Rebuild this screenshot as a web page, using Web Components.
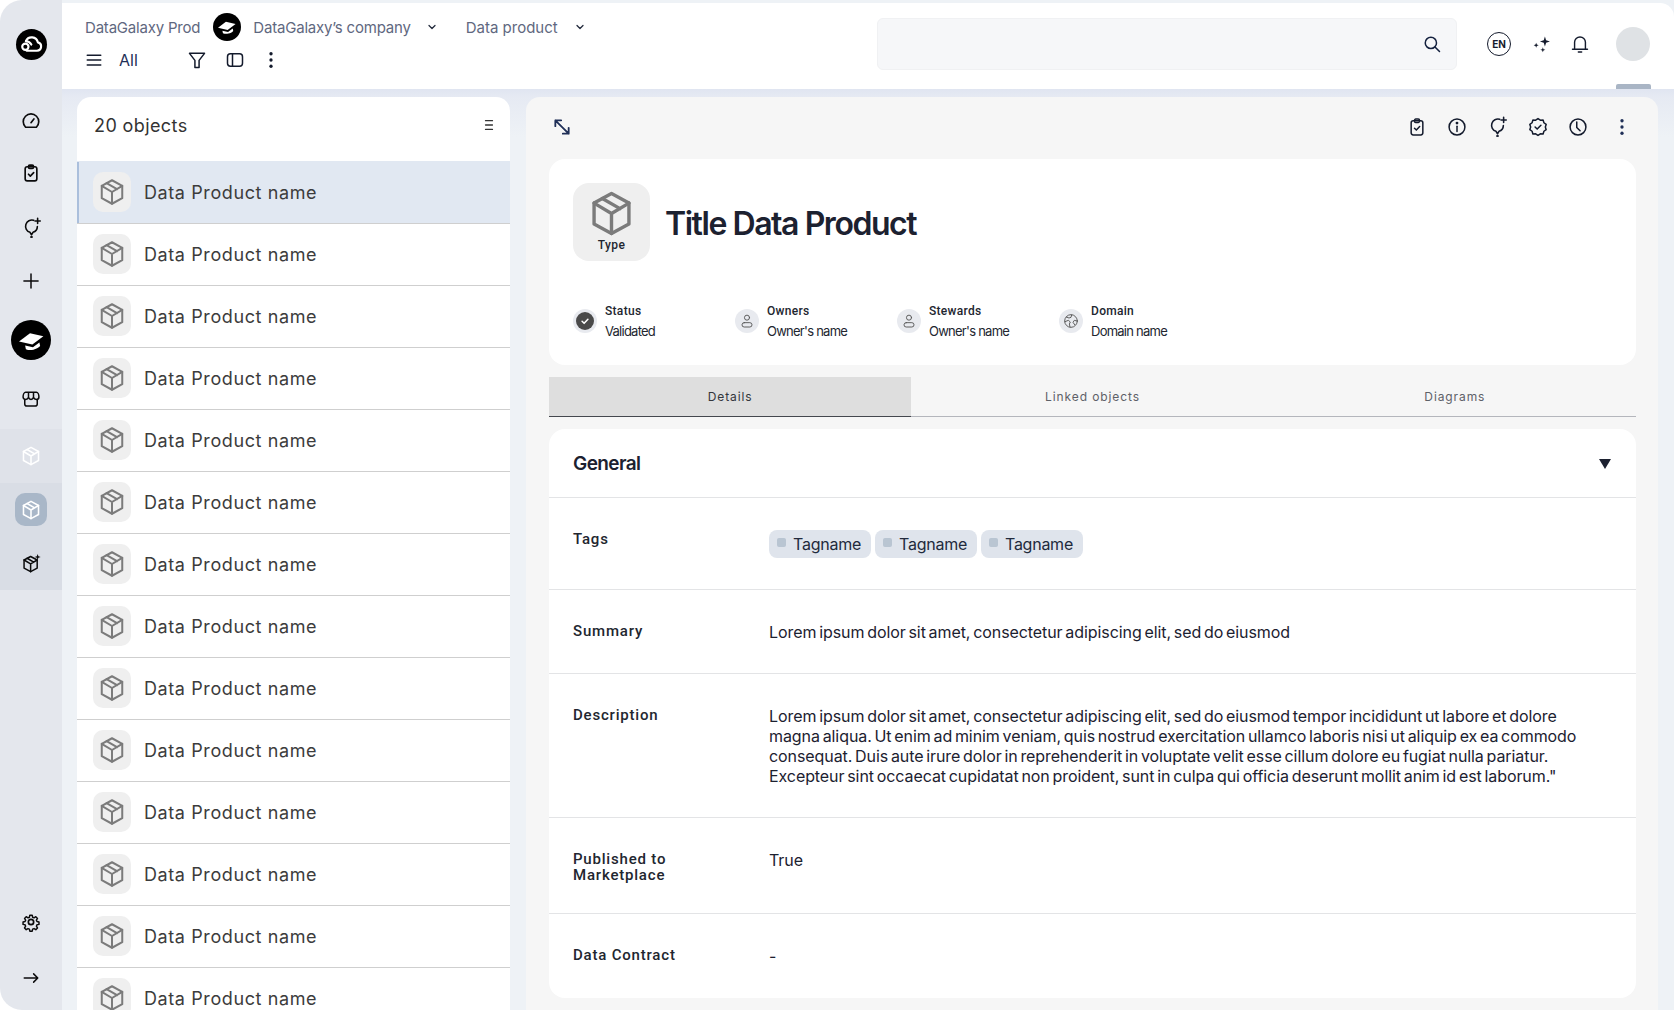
<!DOCTYPE html>
<html lang="en">
<head>
<meta charset="utf-8">
<title>Data product</title>
<style>
  html, body { margin: 0; background: #fff; }
</style>
</head>
<body>
<dg-app></dg-app>
<script>
// all the icons, on a 24 box, stroked with currentColor
const ICONS = {
  box: '<path d="M12 2.600l8.200 4.500v9.800L12 21.400l-8.200-4.500V7.100z"/><path d="M3.800 7.100L12 12l8.200-4.900M12 12v9.400M7.700 4.900l8.300 4.800"/>',
  boxspark: '<path d="M11 4l7.500 4v9.200L11 21.400l-7.500-4.200V8z"/><path d="M3.500 8L11 12.400 18.500 8M11 12.400v9M7 6l7.500 4.400"/><path fill="currentColor" stroke="none" d="M19 1l.9 2.600 2.600.9-2.600.9-.9 2.600-.9-2.600-2.600-.9 2.600-.9z"/>',
  gauge: '<path d="M5.500 19.500a9.300 9.300 0 1 1 13 0z"/><path d="M12 14l3.500-4.500"/>',
  clipboard: '<rect x="5" y="4.500" width="14" height="17" rx="2.500"/><rect x="9" y="2.500" width="6" height="4" rx="1.500"/><path d="M9 13.500l2.200 2.200 4-4.200"/>',
  bulb: '<path d="M14.500 3.800a7 7 0 1 0-4.200 13.700L12 20.300l1.700-2.800a7 7 0 0 0 5-6.500"/><path d="M19 1.500v6M16 4.500h6"/><circle cx="12" cy="22.800" r=".6" fill="currentColor"/>',
  plus: '<path d="M12 3.500v17M3.500 12h17"/>',
  store: '<path d="M5.500 4h13c1.500 0 3 2.500 3 5.500 0 1.500-1.200 3-3 3s-3-1-3.500-2.500c-.5 1.500-1.500 2.500-3 2.500s-2.500-1-3-2.500c-.5 1.500-1.700 2.500-3.500 2.500s-3-1.500-3-3C2.500 6.500 4 4 5.500 4z"/><path d="M4.500 12.500V18a2.500 2.500 0 0 0 2.500 2.500h10a2.500 2.500 0 0 0 2.500-2.500v-5.500M9 4.500V9M15 4.500V9"/>',
  gear: '<circle cx="12" cy="12" r="3.200"/><path d="M10.400 2.800h3.200l.6 2.700 1.900.8 2.400-1.500 2.300 2.300-1.500 2.400.8 1.900 2.700.6v3.200l-2.700.6-.8 1.900 1.500 2.400-2.300 2.300-2.400-1.500-1.900.8-.6 2.700h-3.200l-.6-2.700-1.900-.8-2.400 1.500-2.300-2.300 1.500-2.400-.8-1.900-2.700-.6v-3.200l2.700-.6.800-1.900-1.500-2.400 2.300-2.300 2.400 1.500 1.900-.8z" transform="translate(1.400 1.400) scale(.885)"/>',
  arrow: '<path d="M3 12h18M15.500 6.500L21 12l-5.500 5.500"/>',
  menu: '<path d="M3 5.500h18M3 12h18M3 18.500h18"/>',
  filter: '<path d="M3 4h18l-6.500 8.500V21h-5v-8.500z"/>',
  panel: '<rect x="3" y="4.500" width="18" height="15" rx="3.500"/><path d="M9 4.500v15"/>',
  dots: '<g fill="currentColor" stroke="none"><circle cx="12" cy="4.500" r="2"/><circle cx="12" cy="12" r="2"/><circle cx="12" cy="19.500" r="2"/></g>',
  chevron: '<path d="M6 9l6 6 6-6"/>',
  search: '<circle cx="10.500" cy="10.500" r="7.500"/><path d="M16 16l6 6"/>',
  sparks: '<g fill="currentColor" stroke="none"><path d="M15.500 3l1.400 4.600 4.600 1.400-4.600 1.400-1.400 4.600-1.400-4.600L9.500 9l4.600-1.400z"/><path d="M5 10.500l.8 2.200 2.200.8-2.200.8L5 16.500l-.8-2.200-2.200-.8 2.200-.8z"/><path d="M13 16l.8 2.200 2.200.8-2.200.8-.8 2.200-.8-2.200-2.200-.8 2.200-.8z"/></g>',
  bell: '<path d="M5.500 18V10a6.500 6.500 0 0 1 13 0v8"/><path d="M3 18.300h18"/><path d="M10 21.500h4"/>',
  expand: '<path d="M4 4l16 16M4 11V4h7M20 13v7h-7"/>',
  lines: '<path d="M6 4.500h12M6 12h12M6 19.500h12"/>',
  info: '<circle cx="12" cy="12" r="9.500"/><path d="M12 11v6.500"/><circle cx="12" cy="7.300" r=".8" fill="currentColor"/>',
  badge: '<path d="M12 2.500l2.800 1.900 3.300-.1 1 3.200 2.700 2-1 3.100 1 3.200-2.700 1.900-1 3.200-3.300-.1L12 22.700l-2.800-1.900-3.300.1-1-3.200-2.700-1.900 1-3.200-1-3.100 2.700-2 1-3.200 3.300.1z" transform="translate(0 -.6)"/><path d="M8.500 12l2.500 2.500 4.500-4.500"/>',
  clock: '<circle cx="12" cy="12" r="9.500"/><path d="M10.500 6v6.500l4 4"/>',
  user: '<circle cx="12" cy="7" r="3.800"/><rect x="4.500" y="14.500" width="15" height="6.500" rx="3.250"/>',
  globe: '<circle cx="12" cy="12" r="9.500"/><path d="M5 6l4 1.500 3-1 1-3.500M3 13l5-2 3 2.500-1.500 3 1 4.500M21 12l-4-1-2 3 2.500 3.500"/>',
  check: '<path d="M7 12.500l3.500 3.500 6.500-7"/>',
  cap: '<g transform="rotate(-12 12 12)"><path fill="currentColor" stroke="none" d="M12 5L24 10.500 12 16 0 10.500z"/><path fill="currentColor" stroke="none" d="M5 15.500l7 3.200 7-3.200V19c-2 1.500-4.500 2-7 2s-5-.5-7-2z"/></g>',
  logo: '<circle cx="6.800" cy="14.500" r="2.900"/><path d="M8 18.200h9.500a3.900 3.900 0 0 0 .8-7.700 5.800 5.800 0 0 0-11-1.200"/><path d="M7.300 9.300c2.300.2 4 1.300 5 3.200"/>'
};

class DgIcon extends HTMLElement {
  constructor () {
    super();
    this.attachShadow({ mode: 'open' });
  }
  connectedCallback () {
    const size = this.getAttribute('size') || 20;
    const stroke = this.getAttribute('stroke') || 2;
    this.shadowRoot.innerHTML = `
      <style>
        :host { display: inline-flex; flex: none; width: ${size}px; height: ${size}px; }
        svg { width: 100%; height: 100%; display: block; fill: none; stroke: currentColor; stroke-width: ${stroke}; stroke-linecap: round; stroke-linejoin: round; }
      </style>
      <svg viewBox="0 0 24 24">${ICONS[this.getAttribute('name')]}</svg>`;
  }
}

// one slot of the left rail, --h is set by the rail
class DgRailItem extends HTMLElement {
  constructor () {
    super();
    this.attachShadow({ mode: 'open' });
    this.shadowRoot.innerHTML = `
      <style>
        :host { display: flex; align-items: center; justify-content: center; height: var(--h, 54px); box-sizing: border-box; color: #0b0b0c; }
        :host([kind="round"]) .in { width: 40px; height: 40px; border-radius: 50%; background: #000; color: #fff; }
        :host([kind="logo"]) .in { width: 31px; height: 31px; border-radius: 50%; background: #000; color: #fff; }
        :host([kind="ghost"]) { color: #fff; }
        :host([kind="active"]) .in { width: 32px; height: 33px; border-radius: 10px; background: #a9b7c8; color: #fff; }
        .in { display: flex; align-items: center; justify-content: center; }
      </style>
      <div class="in"><slot></slot></div>`;
  }
}

class DgRail extends HTMLElement {
  constructor () {
    super();
    this.attachShadow({ mode: 'open' });
    this.shadowRoot.innerHTML = `
      <style>
        :host { display: flex; flex-direction: column; background: #e4e7ed; border-radius: 22px 0 0 22px; overflow: hidden; }
        .group { background: #dfe2e9; }
        .picked { background: #d9dde5; }
        .fill { flex: 1; }
      </style>
      <dg-rail-item kind="logo" style="--h:95px;padding-bottom:7px"><dg-icon name="logo" size="26" stroke="2"></dg-icon></dg-rail-item>
      <dg-rail-item style="--h:52px"><dg-icon name="gauge" size="20"></dg-icon></dg-rail-item>
      <dg-rail-item style="--h:52px"><dg-icon name="clipboard" size="20"></dg-icon></dg-rail-item>
      <dg-rail-item style="--h:56px"><dg-icon name="bulb" size="21" stroke="1.800"></dg-icon></dg-rail-item>
      <dg-rail-item style="--h:52px"><dg-icon name="plus" size="20" stroke="1.800"></dg-icon></dg-rail-item>
      <dg-rail-item kind="round" style="--h:66px"><dg-icon name="cap" size="25"></dg-icon></dg-rail-item>
      <dg-rail-item style="--h:56px;padding-bottom:4px"><dg-icon name="store" size="20" stroke="1.800"></dg-icon></dg-rail-item>
      <div class="group">
        <dg-rail-item kind="ghost" style="--h:54px"><dg-icon name="box" size="22" stroke="1.700"></dg-icon></dg-rail-item>
      </div>
      <div class="picked">
        <dg-rail-item kind="active" style="--h:53px"><dg-icon name="box" size="22" stroke="1.700"></dg-icon></dg-rail-item>
        <dg-rail-item style="--h:54px"><dg-icon name="boxspark" size="21" stroke="1.700"></dg-icon></dg-rail-item>
      </div>
      <div class="fill"></div>
      <dg-rail-item style="--h:56px"><dg-icon name="gear" size="20"></dg-icon></dg-rail-item>
      <dg-rail-item style="--h:56px;margin-bottom:4px"><dg-icon name="arrow" size="18"></dg-icon></dg-rail-item>`;
  }
}

class DgHeader extends HTMLElement {
  constructor () {
    super();
    this.attachShadow({ mode: 'open' });
    this.shadowRoot.innerHTML = `
      <style>
        :host { display: flex; position: relative; height: 86px; flex: none; background: #fff; border-radius: 0 14px 0 0; font-family: Inter, "Liberation Sans", sans-serif; }
        .left { width: 792px; padding: 10px 0 0 23px; flex: none; }
        .crumbs { display: flex; align-items: center; height: 28px; font-size: 15px; color: #5f6880; font-weight: 400; }
        .crumbs .a { letter-spacing: -.2px; }
        .round { width: 28px; height: 28px; border-radius: 50%; background: #000; display: flex; align-items: center; justify-content: center; margin: 0 12px 0 13px; }
        .crumbs dg-icon { color: #222a3c; }
        .crumbs .round dg-icon { color: #fff; }
        .tools { display: flex; align-items: center; height: 26px; margin-top: 6px; color: #141b2d; }
        .all { font-size: 16px; margin: 0 48px 0 16px; width: 20px; color: #1f2f57; }
        .search { width: 580px; height: 52px; margin-top: 15px; box-sizing: border-box; background: #f6f7f9; border: 1px solid #f0f1f3; border-radius: 6px; display: flex; align-items: center; justify-content: flex-end; padding-right: 15px; color: #14213f; }
        .acts { display: flex; align-items: center; height: 82px; color: #141b2d; }
        .en { width: 24px; height: 24px; border: 1.200px solid #141b2d; border-radius: 50%; margin-left: 30px; box-sizing: border-box; display: flex; align-items: center; justify-content: center; font-size: 10px; font-weight: 700; }
        .avatar { width: 34px; height: 34px; border-radius: 50%; background: #dfe2e5; margin-left: 26px; }
        .nub { position: absolute; right: 23px; bottom: 0; width: 35px; height: 5px; border-radius: 2px 2px 0 0; background: #a9b5c5; }
      </style>
      <div class="left">
        <div class="crumbs">
          <span class="a">DataGalaxy Prod</span>
          <span class="round"><dg-icon name="cap" size="18"></dg-icon></span>
          <span class="a">DataGalaxy’s company</span>
          <dg-icon name="chevron" size="12" stroke="2.500" style="margin:0 28px 0 15px"></dg-icon>
          <span>Data product</span>
          <dg-icon name="chevron" size="12" stroke="2.500" style="margin-left:16px"></dg-icon>
        </div>
        <div class="tools">
          <dg-icon name="menu" size="18"></dg-icon>
          <span class="all">All</span>
          <dg-icon name="filter" size="20" stroke="1.800"></dg-icon>
          <dg-icon name="panel" size="20" stroke="1.800" style="margin-left:18px"></dg-icon>
          <dg-icon name="dots" size="20" style="margin-left:16px"></dg-icon>
        </div>
      </div>
      <div class="search"><dg-icon name="search" size="18"></dg-icon></div>
      <div class="acts">
        <span class="en">EN</span>
        <dg-icon name="sparks" size="20" style="margin-left:21px"></dg-icon>
        <dg-icon name="bell" size="20" stroke="1.700" style="margin-left:18px"></dg-icon>
        <span class="avatar"></span>
      </div>
      <span class="nub"></span>`;
  }
}

class DgTile extends HTMLElement {
  constructor () {
    super();
    this.attachShadow({ mode: 'open' });
    this.shadowRoot.innerHTML = `
      <style>
        :host { display: flex; flex: none; align-items: center; justify-content: center; width: 38px; height: 40px; border-radius: 10px; background: #efefef; color: #7b7b7b; }
      </style>
      <dg-icon name="box" size="30" stroke="1.600"></dg-icon>`;
  }
}

class DgRow extends HTMLElement {
  constructor () {
    super();
    this.attachShadow({ mode: 'open' });
    this.shadowRoot.innerHTML = `
      <style>
        :host { display: flex; flex: none; align-items: center; gap: 13px; height: 62px; box-sizing: border-box; padding: 0 0 1px 16px; border-top: 1px solid #cfcfcf; font: 400 18px Inter, "Liberation Sans", sans-serif; letter-spacing: .6px; color: #3c3c3c; }
        :host([selected]) { background: #e1e8f2; border-top-color: #e1e8f2; box-shadow: inset 2px 0 0 #aabfdc; }
      </style>
      <dg-tile></dg-tile><span><slot></slot></span>`;
  }
}

class DgList extends HTMLElement {
  constructor () {
    super();
    this.attachShadow({ mode: 'open' });
    let rows = '';
    for (let i = 0; i < 14; i++) {
      rows += `<dg-row ${i === 0 ? 'selected' : ''}>Data Product name</dg-row>`;
    }
    this.shadowRoot.innerHTML = `
      <style>
        :host { display: flex; flex-direction: column; flex: none; width: 433px; background: #fff; border-radius: 14px 14px 0 0; overflow: hidden; }
        .head { display: flex; align-items: center; justify-content: space-between; height: 64px; flex: none; box-sizing: border-box; padding: 0 14px 8px 17px; font: 400 18px Inter, "Liberation Sans", sans-serif; letter-spacing: .4px; color: #333; }
        .head dg-icon { color: #333; }
      </style>
      <div class="head"><span>20 objects</span><dg-icon name="lines" size="14" stroke="2.200"></dg-icon></div>
      ${rows}`;
  }
}

class DgMeta extends HTMLElement {
  constructor () {
    super();
    this.attachShadow({ mode: 'open' });
  }
  connectedCallback () {
    const dark = this.getAttribute('icon') === 'check';
    this.shadowRoot.innerHTML = `
      <style>
        :host { display: flex; align-items: center; gap: 8px; width: 162px; flex: none; }
        .ring { width: 24px; height: 24px; border-radius: 50%; background: #e8eaef; display: flex; align-items: center; justify-content: center; color: #555; }
        .disc { width: 18px; height: 18px; border-radius: 50%; background: #4a4a4a; color: #fff; display: flex; align-items: center; justify-content: center; }
        .label { font: 500 12px/20px Roboto, "Liberation Sans", sans-serif; color: #22262f; letter-spacing: .3px; }
        .value { font: 400 13px/20px Inter, "Liberation Sans", sans-serif; color: #22262f; letter-spacing: -.75px; white-space: nowrap; }
      </style>
      <span class="ring">${dark
        ? '<span class="disc"><dg-icon name="check" size="14" stroke="2.600"></dg-icon></span>'
        : `<dg-icon name="${this.getAttribute('icon')}" size="16" stroke="1.400"></dg-icon>`}</span>
      <div>
        <div class="label">${this.getAttribute('label')}</div>
        <div class="value">${this.getAttribute('value')}</div>
      </div>`;
  }
}

class DgCard extends HTMLElement {
  constructor () {
    super();
    this.attachShadow({ mode: 'open' });
    this.shadowRoot.innerHTML = `
      <style>
        :host { display: block; height: 206px; flex: none; box-sizing: border-box; padding: 24px; background: #fff; border-radius: 16px; }
        .head { display: flex; align-items: center; gap: 16px; }
        .tile { width: 77px; height: 78px; border-radius: 16px; background: #efefef; display: flex; flex-direction: column; align-items: center; padding-top: 5px; box-sizing: border-box; color: #7b7b7b; }
        .tile span { font: 500 12px/16px Roboto, "Liberation Sans", sans-serif; letter-spacing: .4px; color: #22262f; margin-top: -2px; }
        h1 { margin: 3px 0 0 -1px; font: 600 32px/40px Inter, "Liberation Sans", sans-serif; letter-spacing: -1.450px; color: #1c2130; }
        .meta { display: flex; margin-top: 40px; }
      </style>
      <div class="head">
        <div class="tile"><dg-icon name="box" size="51" stroke="1.600"></dg-icon><span>Type</span></div>
        <h1>Title Data Product</h1>
      </div>
      <div class="meta">
        <dg-meta icon="check" label="Status" value="Validated"></dg-meta>
        <dg-meta icon="user" label="Owners" value="Owner's name"></dg-meta>
        <dg-meta icon="user" label="Stewards" value="Owner's name"></dg-meta>
        <dg-meta icon="globe" label="Domain" value="Domain name"></dg-meta>
      </div>`;
  }
}

class DgTabs extends HTMLElement {
  constructor () {
    super();
    this.attachShadow({ mode: 'open' });
    this.shadowRoot.innerHTML = `
      <style>
        :host { display: grid; grid-template-columns: repeat(3, 1fr); height: 40px; flex: none; margin-top: 12px; font: 400 12px Inter, "Liberation Sans", sans-serif; letter-spacing: .9px; color: #5e6168; }
        div { display: flex; align-items: center; justify-content: center; border-bottom: 1px solid #b4b6bc; }
        .on { background: #dedede; border-bottom-color: #44474e; color: #33363c; }
      </style>
      <div class="on">Details</div><div>Linked objects</div><div>Diagrams</div>`;
  }
}

class DgTag extends HTMLElement {
  constructor () {
    super();
    this.attachShadow({ mode: 'open' });
    this.shadowRoot.innerHTML = `
      <style>
        :host { display: inline-flex; align-items: center; height: 28px; box-sizing: border-box; padding: 0 10px 0 8px; gap: 7px; background: #dfe4ec; border-radius: 8px; font: 400 16px Inter, "Liberation Sans", sans-serif; letter-spacing: -.25px; color: #222a3c; }
        i { width: 9px; height: 9px; border-radius: 2px; background: #b9c5d2; margin-top: -3px; }
      </style>
      <i></i><span><slot></slot></span>`;
  }
}

class DgField extends HTMLElement {
  constructor () {
    super();
    this.attachShadow({ mode: 'open' });
  }
  connectedCallback () {
    this.shadowRoot.innerHTML = `
      <style>
        :host { display: grid; grid-template-columns: 196px 1fr; box-sizing: border-box; padding: 33px 24px 30px; border-bottom: 1px solid #e3e4e6; }
        :host(:last-child) { border-bottom-color: transparent; }
        .label { font: 500 15px/16px Roboto, "Liberation Sans", sans-serif; letter-spacing: .8px; color: #22262f; white-space: pre-line; }
        .value { font: 400 16px/20px Inter, "Liberation Sans", sans-serif; letter-spacing: -.08px; word-spacing: -1.600px; color: #1c2130; white-space: nowrap; margin: -1px 0 1px; }
      </style>
      <div class="label">${this.getAttribute('label')}</div>
      <div class="value"><slot></slot></div>`;
  }
}

class DgSection extends HTMLElement {
  constructor () {
    super();
    this.attachShadow({ mode: 'open' });
    this.shadowRoot.innerHTML = `
      <style>
        :host { display: block; flex: none; margin-top: 12px; background: #fff; border-radius: 16px; overflow: hidden; }
        .head { display: flex; align-items: center; justify-content: space-between; height: 69px; box-sizing: border-box; padding: 1px 25px 0 24px; border-bottom: 1px solid #e3e4e6; font: 600 19px Inter, "Liberation Sans", sans-serif; letter-spacing: -.6px; color: #1c2130; }
        svg { width: 12px; height: 10px; display: block; }
      </style>
      <div class="head"><span>General</span><svg viewBox="0 0 12 10"><path d="M0 0h12L6 10z" fill="#1c2130"/></svg></div>
      <slot></slot>`;
  }
}

class DgDetail extends HTMLElement {
  constructor () {
    super();
    this.attachShadow({ mode: 'open' });
    this.shadowRoot.innerHTML = `
      <style>
        :host { display: flex; flex-direction: column; flex: none; width: 1132px; box-sizing: border-box; padding: 0 22px 0 23px; background: #f6f6f6; border-radius: 14px 14px 0 0; overflow: hidden; }
        .bar { display: flex; align-items: center; height: 62px; padding-bottom: 3px; box-sizing: border-box; flex: none; color: #141b2d; }
        .bar .sp { flex: 1; }
        .bar dg-icon { margin-left: 20px; }
      </style>
      <div class="bar">
        <dg-icon name="expand" size="20" style="margin-left:3px;color:#1f2f57" stroke="2.200"></dg-icon>
        <span class="sp"></span>
        <dg-icon name="clipboard" size="20" stroke="1.800"></dg-icon>
        <dg-icon name="info" size="20" stroke="1.800"></dg-icon>
        <dg-icon name="bulb" size="21" stroke="1.800"></dg-icon>
        <dg-icon name="badge" size="20" stroke="1.800"></dg-icon>
        <dg-icon name="clock" size="20" stroke="1.800"></dg-icon>
        <dg-icon name="dots" size="20" style="margin:0 4px 0 24px;color:#1f2f57"></dg-icon>
      </div>
      <dg-card></dg-card>
      <dg-tabs></dg-tabs>
      <dg-section>
        <dg-field label="Tags"><div style="display:flex;gap:4px;height:28px"><dg-tag>Tagname</dg-tag><dg-tag>Tagname</dg-tag><dg-tag>Tagname</dg-tag></div></dg-field>
        <dg-field label="Summary">Lorem ipsum dolor sit amet, consectetur adipiscing elit, sed do eiusmod</dg-field>
        <dg-field label="Description">Lorem ipsum dolor sit amet, consectetur adipiscing elit, sed do eiusmod tempor incididunt ut labore et dolore<br>magna aliqua. Ut enim ad minim veniam, quis nostrud exercitation ullamco laboris nisi ut aliquip ex ea commodo<br>consequat. Duis aute irure dolor in reprehenderit in voluptate velit esse cillum dolore eu fugiat nulla pariatur.<br>Excepteur sint occaecat cupidatat non proident, sunt in culpa qui officia deserunt mollit anim id est laborum."</dg-field>
        <dg-field label="Published to&#10;Marketplace">True</dg-field>
        <dg-field label="Data Contract">-</dg-field>
      </dg-section>`;
  }
}

class DgApp extends HTMLElement {
  constructor () {
    super();
    this.attachShadow({ mode: 'open' });
    this.shadowRoot.innerHTML = `
      <style>
        :host { display: grid; grid-template-columns: 62px 1fr; width: 1674px; height: 1010px; overflow: hidden; }
        main { display: flex; flex-direction: column; min-width: 0; height: 1010px; padding-top: 3px; box-sizing: border-box; background: #eef2f6; overflow: hidden; }
        .band { height: 8px; flex: none; background: linear-gradient(#e0e5f1, #e6eaf3); }
        .work { display: flex; gap: 16px; flex: 1; min-height: 0; padding-left: 15px; background: linear-gradient(#e6eaf3, #eef2f6 40px); }
      </style>
      <dg-rail></dg-rail>
      <main>
        <dg-header></dg-header>
        <div class="band"></div>
        <div class="work"><dg-list></dg-list><dg-detail></dg-detail></div>
      </main>`;
  }
}

customElements.define('dg-icon', DgIcon);
customElements.define('dg-rail-item', DgRailItem);
customElements.define('dg-rail', DgRail);
customElements.define('dg-header', DgHeader);
customElements.define('dg-tile', DgTile);
customElements.define('dg-row', DgRow);
customElements.define('dg-list', DgList);
customElements.define('dg-meta', DgMeta);
customElements.define('dg-card', DgCard);
customElements.define('dg-tabs', DgTabs);
customElements.define('dg-tag', DgTag);
customElements.define('dg-field', DgField);
customElements.define('dg-section', DgSection);
customElements.define('dg-detail', DgDetail);
customElements.define('dg-app', DgApp);
</script>
</body>
</html>
